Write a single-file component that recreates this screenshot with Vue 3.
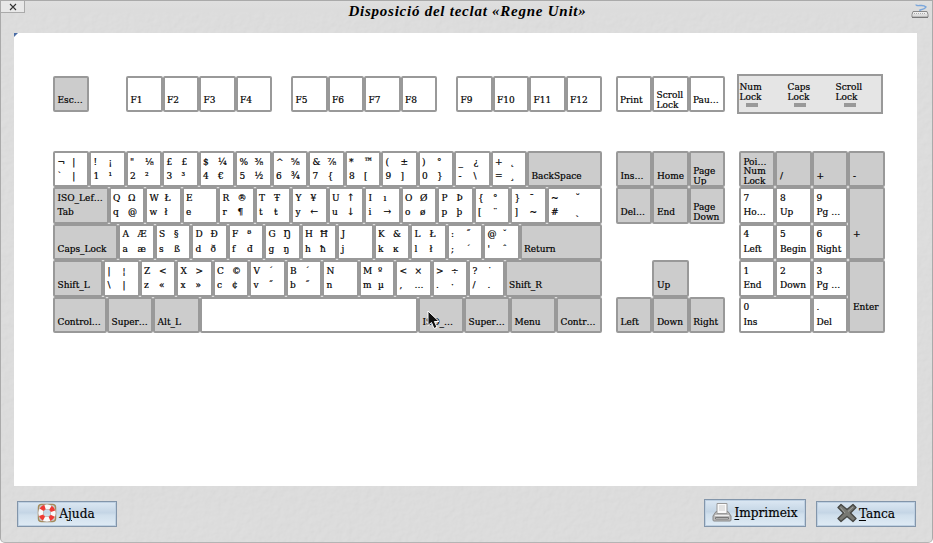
<script setup>
// Keys: [topLeft, topRight, bottomLeft, bottomRight] or a named label
const P = 36.5
const g = (t, w = P) => ({ g: t.split(' ').map(c => c === '∅' ? '' : c), w })
const n = (label, w = P, top = '') => ({ label, w, top, dark: true })
const f = label => ({ label, w: P })

const functionGroups = [
  [{ label: 'Esc…', w: 36, dark: true }],
  ['F1', 'F2', 'F3', 'F4'].map(f),
  ['F5', 'F6', 'F7', 'F8'].map(f),
  ['F9', 'F10', 'F11', 'F12'].map(f),
  ['Print', 'Scroll\nLock', 'Pau…'].map(f)
]
const leds = ['Num\nLock', 'Caps\nLock', 'Scroll\nLock']

const mainRows = [
  [g('¬ | ` |', 36), g('! ¡ 1 ¹'), g('" ⅛ 2 ²'), g('£ £ 3 ³'), g('$ ¼ 4 €'), g('% ⅜ 5 ½'), g('^ ⅝ 6 ¾'),
    g('& ⅞ 7 {'), g('* ™ 8 ['), g('( ± 9 ]'), g(') ° 0 }'), g('_ ¿ - \\'), g('+ ˛ = ¸'), n('BackSpace', 75)],
  [n('Tab', 55.5, 'ISO_Lef…'), g('Q Ω q @'), g('W Ł w ł'), g('E ∅ e ∅'), g('R ® r ¶'), g('T Ŧ t ŧ'), g('Y ¥ y ←'),
    g('U ↑ u ↓'), g('I ı i →'), g('O Ø o ø'), g('P Þ p þ'), g('{ ° [ ¨'), g('} ¯ ] ~'), g('~ ˘ # ˎ', 55.5)],
  [n('Caps_Lock', 65), g('A Æ a æ'), g('S § s ß'), g('D Ð d ð'), g('F ª f đ'), g('G Ŋ g ŋ'), g('H Ħ h ħ'),
    g('J ∅ j ∅'), g('K & k ĸ'), g('L Ł l ł'), g(': ˝ ; ´'), g("@ ˇ ' ˆ"), n('Return', 82.5)],
  [n('Shift_L', 50), g('| ¦ \\ |'), g('Z < z «'), g('X > x »'), g('C © c ¢'), g('V ´ v ˝'), g('B ´ b ˝'),
    g('N ∅ n ∅'), g('M º m µ'), g('< × , …'), g('> ÷ . ·'), g('? ˙ / .'), n('Shift_R', 97.5)],
  [n('Control…', 54), n('Super…', 46), n('Alt_L', 46.5), { label: '', w: 218.5 }, n('ISO_…', 46),
    n('Super…', 46), n('Menu', 46), n('Contr…', 46)]
]

const navKeys = [
  ['Ins…', 1, 1], ['Home', 2, 1], ['Page\nUp', 3, 1],
  ['Del…', 1, 2], ['End', 2, 2], ['Page\nDown', 3, 2],
  ['Up', 2, 4], ['Left', 1, 5], ['Down', 2, 5], ['Right', 3, 5]
].map(([label, x, y]) => ({ label, dark: true, pos: `nx${x} ny${y}` }))

const pad = [
  n('Num\nLock', P, 'Poi…'), n('/'), n('+'), n('-'),
  { top: '7', label: 'Ho…' }, { top: '8', label: 'Up' }, { top: '9', label: 'Pg …' }, { label: '+', dark: true, pos: 'tall' },
  { top: '4', label: 'Left' }, { top: '5', label: 'Begin' }, { top: '6', label: 'Right' },
  { top: '1', label: 'End' }, { top: '2', label: 'Down' }, { top: '3', label: 'Pg …' }, { label: 'Enter', dark: true, pos: 'tall' },
  { top: '0', label: 'Ins', pos: 'double' }, { top: '.', label: 'Del' }
]
</script>

<template>
  <div class="window">
    <svg class="texture" aria-hidden="true">
      <filter id="paper"><feTurbulence type="fractalNoise" baseFrequency="0.16" numOctaves="3" seed="4" />
        <feDiffuseLighting lighting-color="#eee" surfaceScale="0.55"><feDistantLight azimuth="45" elevation="61" /></feDiffuseLighting>
      </filter>
      <rect width="100%" height="100%" filter="url(#paper)" />
    </svg>
    <header>
      <div class="close"><svg width="8" height="8" viewBox="0 0 8 8"><path d="M1 1l6 6M7 1L1 7" stroke="#333" stroke-width="1.1" /></svg></div>
      <h1>Disposició del teclat «Regne Unit»</h1>
      <svg class="app-icon" width="18" height="16" viewBox="0 0 18 16">
        <path d="M5 1.500Q5 3 9 2.500T15 4Q14 6 9 7V9" fill="none" stroke="#7ba7dc" stroke-width="1.500" />
        <path d="M2 8.500h14l1 3v2.500H1v-2.500z" fill="#eee" stroke="#888" />
        <path d="M3 10.500h12M2.500 12h13" stroke="#aaa" stroke-dasharray="1 1" /><path d="M1 14.500h16" stroke="#777" />
      </svg>
    </header>

    <main>
      <i class="fold"></i>
      <section class="top">
        <div v-for="(grp, i) in functionGroups" :key="i" class="row" :class="'fg' + i">
          <div v-for="k in grp" :key="k.label" class="key" :class="{ dark: k.dark }" :style="{ width: k.w + 'px' }">
            <span class="label" :class="{ two: k.label.includes('\n') }">{{ k.label }}</span>
          </div>
        </div>
        <div class="leds"><div v-for="l in leds" :key="l" class="led"><span>{{ l }}</span><i></i></div></div>
      </section>
      <section class="blocks">
        <div class="alpha">
          <div v-for="(r, i) in mainRows" :key="i" class="row">
            <div v-for="(k, j) in r" :key="j" class="key" :class="{ dark: k.dark }" :style="{ width: k.w + 'px' }">
              <div v-if="k.g" class="glyphs"><span v-for="(c, m) in k.g" :key="m">{{ c }}</span></div>
              <template v-else><span class="toplabel">{{ k.top }}</span><span class="label">{{ k.label }}</span></template>
            </div>
          </div>
        </div>
        <div class="nav">
          <div v-for="k in navKeys" :key="k.pos" class="key dark" :class="k.pos">
            <span class="label" :class="{ two: k.label.includes('\n') }">{{ k.label }}</span>
          </div>
        </div>
        <div class="pad">
          <div v-for="(k, i) in pad" :key="i" class="key" :class="[{ dark: k.dark }, k.pos]">
            <span class="toplabel">{{ k.top }}</span>
            <span class="label" :class="{ two: k.label.includes('\n') }">{{ k.label }}</span>
          </div>
        </div>
      </section>
    </main>

    <footer>
      <button class="help">
        <svg width="20" height="20" viewBox="0 0 20 20">
          <rect x="1.500" y="1.500" width="17" height="17" rx="3" fill="none" stroke="#a48b5c" stroke-width="1.500" />
          <circle cx="10" cy="10" r="6.300" fill="none" stroke="#b5aaa5" stroke-width="5.600" />
          <circle cx="10" cy="10" r="6.300" fill="none" stroke="#fafafa" stroke-width="4.600" />
          <circle cx="10" cy="10" r="6.300" fill="none" stroke="#ee3b35" stroke-width="4.600" stroke-dasharray="4.2 5.696" stroke-dashoffset="-2.848" />
        </svg><span>A<u>j</u>uda</span>
      </button>
      <button class="print">
        <svg width="20" height="20" viewBox="0 0 20 20">
          <path d="M4 9.500h12l3 4.500v4q0 1-1 1H2q-1 0-1-1v-4z" fill="#bbb" stroke="#888" />
          <path d="M5 1.500h10v10H5z" fill="#fafafa" stroke="#999" /><path d="M7 4h6M7 6h6M7 8h6" stroke="#ccc" />
          <path d="M3 13.500h14" stroke="#eee" /><path d="M3.500 15.500h13v1.500h-13z" fill="#e8e8e8" stroke="#777" />
        </svg><span><u>I</u>mprimeix</span>
      </button>
      <button class="quit">
        <svg width="20" height="20" viewBox="0 0 20 20">
          <path d="M4 1.500L10 6.500 16 1.500 19 4.500 13.500 10 19 15.500 16 18.500 10 13.500 4 18.500 1 15.500 6.500 10 1 4.500z" fill="#777873" stroke="#454643" stroke-width="1.300" stroke-linejoin="round" />
          <path d="M3.500 4.500l4.500 5.500M16 4l-5 4.500" stroke="#a0a19c" />
        </svg><span><u>T</u>anca</span>
      </button>
    </footer>
    <svg class="cursor" width="14" height="20" viewBox="0 0 14 20"><path d="M1 1v14.500l3.500-3 2.500 6 3-1.300-2.600-5.700h4.600z" fill="#111" stroke="#fff" stroke-width="1" /></svg>
  </div>
</template>

<style>
body { margin: 0; background: #fff; overflow: hidden; }
</style>
<style scoped>
* { box-sizing: border-box; }
.window { position: relative; isolation: isolate; width: 933px; height: 543px; overflow: hidden; background: #dbdbdb; border: 1px solid #aaa; border-bottom-color: #b4b4b4; border-radius: 0 0 5px 5px; font-family: "DejaVu Serif Condensed", "DejaVu Serif", serif; font-stretch: condensed; color: #000; }
.texture { position: absolute; inset: 0; z-index: -1; width: 100%; height: 100%; opacity: .25; }
header { height: 32px; display: flex; align-items: flex-start; justify-content: space-between; background: linear-gradient(#dfdfdf 0, #dcdcdc 9px, transparent 14px); }
.close { width: 24px; height: 12px; display: flex; align-items: center; justify-content: center; background: #e8e8e8; border: solid #aaa; border-width: 0 1px 1px 0; }
h1 { margin: 0 0 0 -1px; width: 240px; font: italic bold 15px/21px "Liberation Serif", serif; letter-spacing: .75px; white-space: nowrap; text-align: center; }
.app-icon { margin: 2px 3px 0 0; }
main { position: relative; width: 903px; height: 453px; margin-left: 13px; padding: 41px 0 0 39px; background: #fff; }
.fold { position: absolute; left: 0; top: 0; border: 2px solid; border-color: #4a6da5 transparent transparent #4a6da5; }
.top { display: flex; align-items: center; height: 40px; }
.row { display: flex; height: 36.4px; }
.fg1 { margin-left: 37px; } .fg2, .fg3 { margin-left: 19px; } .fg4 { margin-left: 13.500px; }
.key { position: relative; border: 2px solid #999; border-radius: 2px; background: #fff; padding: 1.500px 0 0 2.500px; font-size: 10px; line-height: 14.500px; white-space: pre; overflow: hidden; flex: none; -webkit-text-stroke: .2px #000; }
.dark { background: #ccc; }
.top .key { height: 36px; padding-top: 15.500px; }
.label, .toplabel { display: block; }
.toplabel { height: 14.500px; }
.two, .nav .two { line-height: 10px; margin-top: -3.500px; }
.glyphs { display: grid; grid-template-columns: 1fr 1fr; grid-template-rows: 14.500px 14.500px; }
.leds { margin-left: 12px; width: 146px; height: 40px; border: 2px solid #999; background: #e5e5e5; display: grid; grid-template-columns: repeat(3, 48px); padding-top: 5.500px; font-size: 10px; line-height: 10px; white-space: pre; -webkit-text-stroke: .2px #000; }
.led { display: flex; flex-direction: column; padding-left: .5px; }
.led i { width: 12px; height: 4px; margin: 1px 0 0 6px; background: #999; }
.led:last-child i { margin-left: 8px; }
.blocks { display: flex; margin-top: 37px; }
.alpha { width: 549px; }
.nav { display: grid; grid-template-columns: repeat(3, 36.4px); grid-template-rows: repeat(5, 36.4px); margin-left: 14px; }
.nx1 { grid-column: 1; } .nx2 { grid-column: 2; } .nx3 { grid-column: 3; }
.ny1 { grid-row: 1; } .ny2 { grid-row: 2; } .ny4 { grid-row: 4; } .ny5 { grid-row: 5; }
.nav .key { padding-top: 16px; }
.pad { display: grid; grid-template-columns: repeat(4, 36.5px); grid-template-rows: repeat(5, 36.4px); margin-left: 13.800px; }
.tall { grid-row: span 2; grid-column: 4; padding-top: 23.500px; }
.double { grid-column: span 2; }
footer { display: flex; align-items: flex-end; height: 41px; padding: 0 16px; }
button { width: 100px; height: 26px; padding: 0 0 2px; display: flex; align-items: center; justify-content: center; gap: 2px; font: inherit; font-size: 13.500px; color: #000; border: 1px solid #8295aa; border-radius: 0; background: linear-gradient(#dce8f3, #c4d5e5 45%, #d0dfec 55%, #dfebf5); box-shadow: inset 0 0 0 1px #bed0e2; }
button u { text-underline-offset: 2px; }
button span { -webkit-text-stroke: .15px #000; }
.help { padding-right: 2px; }
.print { width: 102px; height: 28px; margin: 0 10px 0 auto; }
.cursor { position: absolute; left: 426px; top: 309px; }
</style>
